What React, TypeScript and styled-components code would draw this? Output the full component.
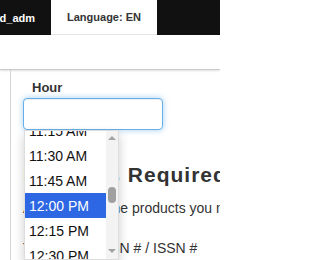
import { useLayoutEffect, useRef } from 'react';
import styled, { createGlobalStyle } from 'styled-components';

const GlobalStyle = createGlobalStyle`
  * {
    box-sizing: border-box;
  }
  html, body {
    overflow: hidden;
    background: #fff;
  }
  body {
    margin: 0;
    font-family: 'Liberation Sans', Arial, sans-serif;
    color: #333;
  }
`;

const Page = styled.div`
  width: 220px;
  height: 260px;
  overflow: hidden;
`;

const TopBar = styled.div`
  height: 35px;
  display: flex;
  background: #111;
`;

const UserItem = styled.div`
  width: 51px;
  flex-shrink: 0;
  display: flex;
  align-items: center;
  justify-content: flex-end;
  overflow: hidden;
  padding-right: 16px;
  color: #fff;
  font-size: 11px;
  font-weight: 700;
  white-space: nowrap;
`;

const LangTab = styled.div`
  width: 106px;
  flex-shrink: 0;
  display: flex;
  align-items: center;
  justify-content: center;
  background: #fff;
  border-bottom: 1px solid #e4e4e4;
  color: #333;
  font-size: 11px;
  font-weight: 700;
  white-space: nowrap;
`;

const BarFill = styled.div`
  flex: 1;
  background: #111;
`;

const SubBar = styled.div`
  height: 35px;
  border-bottom: 1px solid #c9c9c9;
  box-shadow: 0 1px 2px rgba(0, 0, 0, 0.12);
`;

const Body = styled.div`
  display: flex;
  height: 190px;
`;

const Sidebar = styled.div`
  width: 11px;
  flex-shrink: 0;
  border-right: 1px solid #d4d4d4;
`;

const Main = styled.div`
  flex: 1;
  min-width: 0;
  padding: 10px 0 0 12px;
`;

const FieldLabel = styled.label`
  display: block;
  padding-left: 9px;
  margin-bottom: 2px;
  font-size: 13px;
  line-height: 16px;
  font-weight: 700;
  color: #333;
`;

const PickerWrap = styled.div`
  position: relative;
  width: 140px;
`;

const TimeInput = styled.input`
  display: block;
  width: 140px;
  height: 32px;
  padding: 4px 8px;
  border: 1px solid #66afe9;
  border-radius: 4px;
  outline: none;
  font: 14px 'Liberation Sans', Arial, sans-serif;
  box-shadow: inset 0 1px 1px rgba(0, 0, 0, 0.075), 0 0 6px rgba(102, 175, 233, 0.6);
`;

const Dropdown = styled.div`
  position: absolute;
  top: 100%;
  left: 1px;
  width: 95px;
  height: 130px;
  display: flex;
  background: #fff;
  border: 1px solid #ddd;
  box-shadow: 0 5px 10px rgba(0, 0, 0, 0.2);
  z-index: 5;
`;

const TimeList = styled.ul`
  flex: 1;
  margin: 0;
  padding: 0;
  list-style: none;
  overflow: hidden;
`;

const TimeItem = styled.li<{ $selected?: boolean }>`
  height: 25px;
  padding: 1px 0 0 4px;
  line-height: 24px;
  font-size: 14px;
  white-space: nowrap;
  color: ${(p) => (p.$selected ? '#fff' : '#111')};
  background: ${(p) => (p.$selected ? '#2d67e3' : 'transparent')};
`;

const Track = styled.div`
  width: 12px;
  display: flex;
  flex-direction: column;
  align-items: center;
  background: #f3f3f3;
`;

const Arrow = styled.div<{ $down?: boolean }>`
  width: 0;
  height: 0;
  margin-top: ${(p) => (p.$down ? 'auto' : '5px')};
  margin-bottom: ${(p) => (p.$down ? '6px' : '0')};
  border-left: 4px solid transparent;
  border-right: 4px solid transparent;
  ${(p) =>
    p.$down ? 'border-top: 4px solid #a3a3a3;' : 'border-bottom: 4px solid #a3a3a3;'}
`;

const Thumb = styled.div`
  width: 8px;
  height: 16px;
  margin-top: 47px;
  border-radius: 4px;
  background: #a0a0a0;
`;

const Section = styled.div`
  margin-top: 33px;
`;

const Heading = styled.h4`
  margin: 0;
  font-size: 21px;
  line-height: 24px;
  letter-spacing: 1px;
  font-weight: 700;
  color: #333;
  white-space: nowrap;
`;

const Intro = styled.p`
  margin: 11px 0 0;
  font-size: 14px;
  line-height: 20px;
  color: #333;
  white-space: nowrap;
`;

const ColumnRow = styled.div`
  display: grid;
  grid-template-columns: 74px auto;
  margin-top: 20px;
  font-size: 14px;
  line-height: 20px;
  color: #333;
  white-space: nowrap;
`;

const times: string[] = [];
for (let i = 0; i < 96; i++) {
  const h = Math.floor(i / 4);
  const m = (i % 4) * 15;
  const h12 = h % 12 === 0 ? 12 : h % 12;
  times.push(`${h12}:${m === 0 ? '00' : m} ${h < 12 ? 'AM' : 'PM'}`);
}

const App = () => {
  const listRef = useRef<HTMLUListElement>(null);

  useLayoutEffect(() => {
    // 11:15 AM is index 45, show it cut off at the top
    if (listRef.current) listRef.current.scrollTop = 45 * 25 + 13;
  }, []);

  return (
    <Page>
      <GlobalStyle />
      <TopBar>
        <UserItem>ad_adm</UserItem>
        <LangTab>Language: EN</LangTab>
        <BarFill />
      </TopBar>
      <SubBar />
      <Body>
        <Sidebar />
        <Main>
          <FieldLabel>Hour</FieldLabel>
          <PickerWrap>
            <TimeInput type="text" />
            <Dropdown>
              <TimeList ref={listRef}>
                {times.map((t) => (
                  <TimeItem key={t} $selected={t === '12:00 PM'}>
                    {t}
                  </TimeItem>
                ))}
              </TimeList>
              <Track>
                <Arrow />
                <Thumb />
                <Arrow $down />
              </Track>
            </Dropdown>
          </PickerWrap>
          <Section>
            <Heading>Numbers Required</Heading>
            <Intro>Add ISBN for the products you manage.</Intro>
            <ColumnRow>
              <span>Title</span>
              <span>ISBN # / ISSN #</span>
            </ColumnRow>
          </Section>
        </Main>
      </Body>
    </Page>
  );
};

export default App;
